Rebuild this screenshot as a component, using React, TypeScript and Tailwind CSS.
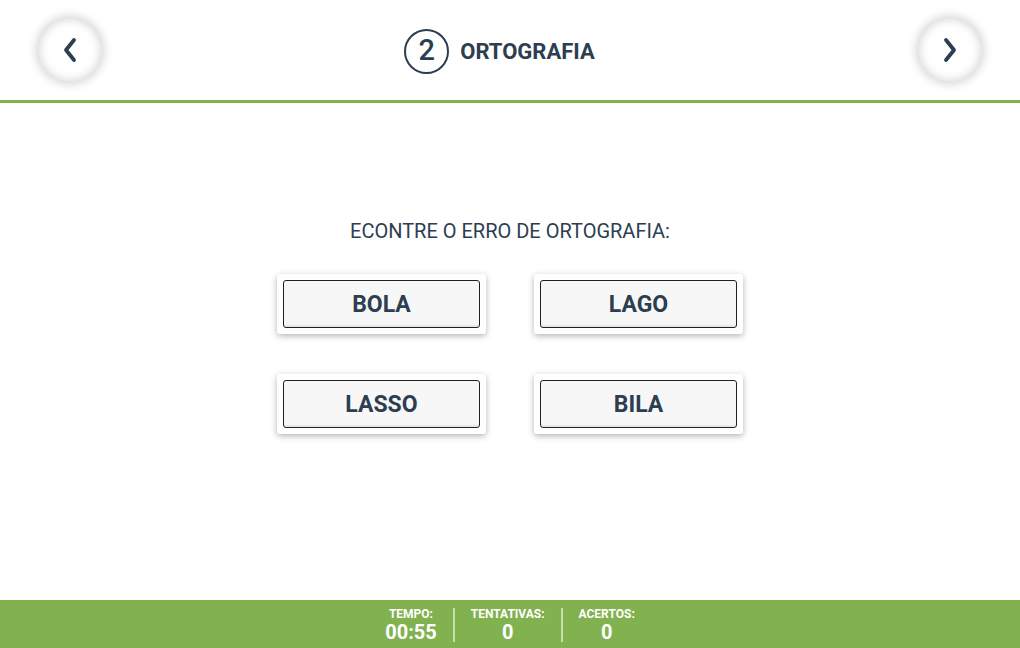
import React from 'react';

const words = ['BOLA', 'LAGO', 'LASSO', 'BILA'];

const NavButton: React.FC<{ dir: 'left' | 'right' }> = ({ dir }) => (
  <button className="w-[66px] h-[66px] rounded-full bg-white flex items-center justify-center shadow-[0_0_9px_2px_rgba(0,0,0,0.14),inset_0_0_9px_3px_rgba(0,0,0,0.14)]">
    <svg width="18" height="26" viewBox="0 0 18 26" fill="none" stroke="#2c3e50" strokeWidth="3.8" strokeLinecap="round" strokeLinejoin="round">
      {dir === 'left' ? <path d="M13 3 L5 13 L13 23" /> : <path d="M5 3 L13 13 L5 23" />}
    </svg>
  </button>
);

const Stat: React.FC<{ label: string; value: string }> = ({ label, value }) => (
  <div className="flex flex-col items-center leading-none px-4">
    <span className="text-[12px] font-bold text-white">{label}</span>
    <span className="text-[20px] font-bold text-white mt-[2px]">{value}</span>
  </div>
);

export default function App() {
  return (
    <div className="w-[1020px] h-[648px] flex flex-col bg-white text-[#2c3e50]" style={{ fontFamily: 'Roboto, "Liberation Sans", sans-serif' }}>
      {/* header */}
      <header className="h-[103px] shrink-0 flex items-center justify-between px-[37px] border-b-[3px] border-[#7fb24c]">
        <NavButton dir="left" />
        <div className="flex items-center gap-[11px] mr-[21px] mt-[2px]">
          <div className="w-[45px] h-[45px] rounded-full border-2 border-[#2c3e50] flex items-center justify-center text-[29px] font-medium">2</div>
          <span className="text-[22px] font-bold">ORTOGRAFIA</span>
        </div>
        <NavButton dir="right" />
      </header>

      {/* quiz */}
      <main className="flex-1 flex flex-col items-center pt-[113px]">
        <p className="text-[20px]">ECONTRE O ERRO DE ORTOGRAFIA:</p>
        <div className="grid grid-cols-2 gap-x-[48px] gap-y-[40px] mt-[28px]">
          {words.map((w) => (
            <div key={w} className="w-[209px] h-[60px] p-[6px] bg-white rounded-[3px] shadow-[0_2px_6px_rgba(0,0,0,0.3)]">
              <button className="w-full h-full pt-[2px] rounded-[3px] border border-[#2a1d16] bg-[#f7f7f7] text-[23px] font-bold text-[#2c3e50] shadow-[inset_0_-2px_0_rgba(0,0,0,0.06)]">
                {w}
              </button>
            </div>
          ))}
        </div>
      </main>

      {/* stats */}
      <footer className="h-12 shrink-0 bg-[#82b14f] flex items-center justify-center pt-[2px]">
        <Stat label="TEMPO:" value="00:55" />
        <div className="w-[2px] h-[34px] bg-[#c6deae]" />
        <Stat label="TENTATIVAS:" value="0" />
        <div className="w-[2px] h-[34px] bg-[#c6deae]" />
        <Stat label="ACERTOS:" value="0" />
      </footer>
    </div>
  );
}
